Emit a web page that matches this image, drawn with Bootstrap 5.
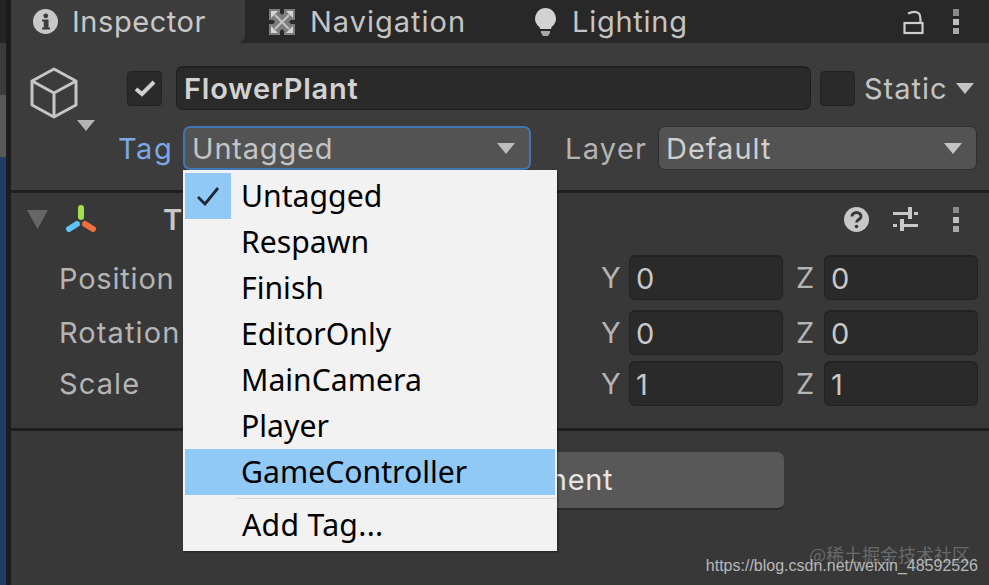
<!DOCTYPE html>
<html lang="en">
<head>
<meta charset="utf-8">
<title>Inspector</title>
<link href="https://cdn.jsdelivr.net/npm/bootstrap@5.3.0/dist/css/bootstrap.min.css" rel="stylesheet">
<style>
html,body{margin:0;height:585px;overflow:hidden;background:#383838}
.stage{width:989px;height:585px;font-family:Inter,"Liberation Sans",sans-serif;color:#c4c4c4;font-size:29px;letter-spacing:1px;line-height:1}
.edge{width:11px;flex:none;background:#1c1c1c}
.edge-a,.edge-b,.edge-c,.edge-d{width:6px}
.edge-a{height:43px;background:#242424}
.edge-b{height:52px;background:#3b3b3b}
.edge-c{height:62px;background:#585858}
.edge-d{height:428px;background:#1f3d66}
.main{width:978px}
.tabbar{height:43px;background:#282828}
.tab-on{width:234px;height:43px;background:#3c3c3c;border-radius:0 0 8px 0;padding-left:22px;gap:14px;color:#c8c8c8;letter-spacing:.55px}
.tab-nav{margin-left:23px;gap:14px;width:267px}
.tab-light{gap:16px;letter-spacing:.75px}
.tab-tools{margin-left:auto;margin-right:30px;gap:29px}
.head{height:147px;background:#3c3c3c;border-bottom:3px solid #1f1f1f;box-sizing:content-box}
.cube-col{width:116px;padding:24px 0 0 18px;flex:none}
.row-a{padding-top:23px;height:67px}
.chk{width:35px;height:35px;background:#2a2a2a;border:1px solid #222;border-radius:4px;flex:none}
.namefield{width:635px;height:44px;background:#2a2a2a;border:1px solid #1e1e1e;border-top-width:2px;border-radius:7px;margin:0 9px 0 14px;padding-left:7px;font-weight:600;color:#d2d2d2;letter-spacing:.8px}
.static{margin-left:9px;gap:8px}
.row-b{padding-top:16px;margin-left:-9px}
.taglabel{width:65px;color:#7ba7e6;flex:none;letter-spacing:1.5px}
.dd{height:44px;background:#535353;border-radius:7px;padding:0 14px 0 7px;flex:none}
.dd-tag{width:348px;border:2px solid #3f76b5;letter-spacing:.8px}
.dd-layer{width:319px;border:1px solid #2e2e2e;color:#cfcfcf}
.laylabel{margin-left:34px;width:93px;flex:none;color:#b4b4b4;letter-spacing:1.3px}
.comp{height:235px;background:#383838;border-bottom:3px solid #1f1f1f;box-sizing:content-box}
.comphead{height:52px;padding-left:16px}
.comp-t{margin-left:65px;font-weight:600;color:#c8c8c8}
.comp-tools{margin-left:auto;margin-right:30px;gap:24px}
.tool-dots{margin-left:11px}
.vrow{height:45px;padding-left:48px}
.vrow-1{margin-top:10px}
.vrow-1 .vlabel{padding-top:1px;letter-spacing:.8px}
.vrow-2{margin-top:10px}
.vrow-3{margin-top:6px}
.vlabel{width:542px;flex:none;color:#b4b4b4;letter-spacing:1.1px}
.axis{width:28px;flex:none;text-align:left;color:#b4b4b4}
.axis-z{margin-left:13px;width:28px}
.vfield{width:154px;height:45px;background:#2a2a2a;border:1px solid #222;border-top-width:2px;border-radius:6px;padding-left:6px;flex:none;color:#c8c8c8}
.bottom{height:154px;padding:21px 0 0 205px}
.addbtn{width:568px;height:58px;background:#585858;border:0;border-bottom:2px solid #2b2b2b;border-radius:7px;color:#e6e6e6;font:inherit;letter-spacing:.7px;padding:0 6px 2px 0}
.tagmenu{left:183px;top:170px;width:374px;height:381px;background:#f2f2f2;box-shadow:1px 1px 2px rgba(0,0,0,.45);padding:3px 2px;font-family:"Noto Sans","Open Sans",sans-serif;font-size:30.2px;letter-spacing:0;color:#000}
.mi{height:46px;padding-left:56px;line-height:46px;position:relative}
.mi-hot{background:#90c8f6;width:370px}
.mi-sep{height:1px;background:#d8d8d8;margin:3px 0 3px 51px}
.mi-add{letter-spacing:.3px;padding-left:57px}
.tickbox{left:0;top:0;width:46px;height:46px;background:#90c8f6}
.wm-cn{right:19px;top:541px;font:18px "Noto Sans CJK SC",sans-serif;color:rgba(200,200,200,.36);letter-spacing:0;white-space:nowrap}
.wm-url{right:11px;top:557px;font:16px "Liberation Sans",Arial,sans-serif;color:#b8b8b8;letter-spacing:0;white-space:nowrap}
.cube-caret{left:66px;top:77px}
.name-row{height:44px}
</style>
</head>
<body>
<div class="stage d-flex position-relative">
  <div class="edge">
    <div class="edge-a"></div><div class="edge-b"></div><div class="edge-c"></div><div class="edge-d"></div>
  </div>
  <div class="main">
    <div class="tabbar d-flex align-items-center">
      <div class="tab-on d-flex align-items-center">
        <svg width="25" height="25" viewBox="0 0 25 25"><circle cx="12.5" cy="12.500" r="12.500" fill="#c8c8c8"/><path d="M9 10.500h6.500v8H17v2H9v-2h1.800v-6H9z" fill="#3c3c3c"/><circle cx="12.800" cy="6.800" r="2.400" fill="#3c3c3c"/></svg>
        <span>Inspector</span>
      </div>
      <div class="tab-nav d-flex align-items-center">
        <svg width="28" height="28" viewBox="0 0 28 28"><path d="M1 1h11v4l2 2 2-2V1h11v11h-4l-2 2 2 2h4v11H16v-4l-2-2-2 2v4H1V16h4l2-2-2-2H1z" fill="#7c7c7c"/><path d="M18 3h7v7zM3 18v7h7zM3 3h7l-7 7zM25 25h-7l7-7z" fill="#d4d4d4"/><path d="M7 7l14 14M21 7L7 21" stroke="#c4c4c4" stroke-width="2"/></svg>
        <span>Navigation</span>
      </div>
      <div class="tab-light d-flex align-items-center">
        <svg width="21" height="28" viewBox="0 0 21 28"><path d="M10.500 0a10.500 10.500 0 0 1 6 19l-.5 2H5l-.5-2a10.500 10.500 0 0 1 6-19z" fill="#d2d2d2"/><path d="M6 23h9v2l-2 3H8l-2-3z" fill="#a8a8a8"/></svg>
        <span>Lighting</span>
      </div>
      <div class="tab-tools d-flex align-items-center">
        <svg width="21" height="26" viewBox="0 0 21 26" fill="none" stroke="#cdcdcd" stroke-width="2.200"><rect x="1.500" y="14" width="18" height="10"/><path d="M5 4.500c3-1.500 8-2.500 11 0 1.500 1.500 1.500 4 1.500 8.500"/></svg>
        <svg width="6" height="25" viewBox="0 0 6 25"><rect width="6" height="7" fill="#8a8a8a"/><rect y="10" width="6" height="6" fill="#c0c0c0"/><rect y="19" width="6" height="6" fill="#a8a8a8"/></svg>
      </div>
    </div>
    <div class="head d-flex">
      <div class="cube-col position-relative">
        <svg width="50" height="52" viewBox="0 0 50 52" fill="none" stroke="#c6c6c6" stroke-width="3" stroke-linejoin="round"><path d="M25 2l22 12v24L25 50 3 38V14z"/><path d="M3 14l22 12 22-12M25 26v24"/></svg>
        <svg class="cube-caret position-absolute" width="18" height="11" viewBox="0 0 18 11"><path d="M0 0h18l-9 11z" fill="#b4b4b4"/></svg>
      </div>
      <div class="flex-grow-1">
        <div class="row-a d-flex align-items-start">
          <div class="name-row d-flex align-items-center w-100">
            <div class="chk d-flex align-items-center justify-content-center"><svg width="22" height="18" viewBox="0 0 22 18"><path d="M2 10l6 5L20 3" fill="none" stroke="#cfcfcf" stroke-width="4"/></svg></div>
            <div class="namefield d-flex align-items-center">FlowerPlant</div>
            <div class="chk"></div>
            <div class="static d-flex align-items-center"><span>Static</span><svg width="18" height="11" viewBox="0 0 18 11"><path d="M0 0h18l-9 11z" fill="#c4c4c4"/></svg></div>
          </div>
        </div>
        <div class="row-b d-flex align-items-center">
          <span class="taglabel">Tag</span>
          <div class="dd dd-tag d-flex align-items-center justify-content-between"><span>Untagged</span><svg width="18" height="11" viewBox="0 0 18 11"><path d="M0 0h18l-9 11z" fill="#bdbdbd"/></svg></div>
          <span class="laylabel">Layer</span>
          <div class="dd dd-layer d-flex align-items-center justify-content-between"><span>Default</span><svg width="18" height="11" viewBox="0 0 18 11"><path d="M0 0h18l-9 11z" fill="#c4c4c4"/></svg></div>
        </div>
      </div>
    </div>
    <div class="comp">
      <div class="comphead d-flex align-items-center">
        <svg width="21" height="19" viewBox="0 0 21 19"><path d="M0 0h21L10.500 19z" fill="#666"/></svg>
        <svg class="ms-3" width="34" height="28" viewBox="0 0 34 28" stroke-width="6" stroke-linecap="round"><path d="M17 3v9" stroke="#a3e04e"/><path d="M13 19l-8 5" stroke="#5fc4f5"/><path d="M21 19l8 5" stroke="#f0713d"/></svg>
        <span class="comp-t">T</span>
        <div class="comp-tools d-flex align-items-center">
          <svg width="25" height="25" viewBox="0 0 25 25"><circle cx="12.500" cy="12.500" r="12.500" fill="#c8c8c8"/><path d="M8 9.500a4.500 4 0 0 1 9 0c0 3-4.500 3-4.500 6" fill="none" stroke="#383838" stroke-width="3"/><circle cx="12.500" cy="19.500" r="1.800" fill="#383838"/></svg>
          <svg width="25" height="24" viewBox="0 0 25 24" fill="#c8c8c8"><rect y="5" width="15" height="3"/><rect x="15" width="4" height="12"/><rect x="21" y="5" width="4" height="3"/><rect y="17" width="4" height="3"/><rect x="7" y="12" width="4" height="12"/><rect x="11" y="17" width="14" height="3"/></svg>
          <svg class="tool-dots" width="6" height="25" viewBox="0 0 6 25"><rect width="6" height="6" fill="#8a8a8a"/><rect y="10" width="6" height="6" fill="#c0c0c0"/><rect y="19" width="6" height="6" fill="#a8a8a8"/></svg>
        </div>
      </div>
      <div class="vrow vrow-1 d-flex align-items-center">
        <span class="vlabel">Position</span><span class="axis">Y</span><div class="vfield d-flex align-items-center">0</div><span class="axis axis-z">Z</span><div class="vfield d-flex align-items-center">0</div>
      </div>
      <div class="vrow vrow-2 d-flex align-items-center">
        <span class="vlabel">Rotation</span><span class="axis">Y</span><div class="vfield d-flex align-items-center">0</div><span class="axis axis-z">Z</span><div class="vfield d-flex align-items-center">0</div>
      </div>
      <div class="vrow vrow-3 d-flex align-items-center">
        <span class="vlabel">Scale</span><span class="axis">Y</span><div class="vfield d-flex align-items-center">1</div><span class="axis axis-z">Z</span><div class="vfield d-flex align-items-center">1</div>
      </div>
    </div>
    <div class="bottom">
      <button class="addbtn" type="button">Add Component</button>
    </div>
  </div>
  <div class="tagmenu position-absolute">
    <div class="mi"><span class="tickbox position-absolute d-flex align-items-center justify-content-center"><svg width="24" height="20" viewBox="0 0 24 20"><path d="M2 11l7 7L22 2" fill="none" stroke="#1c2733" stroke-width="2.800"/></svg></span>Untagged</div>
    <div class="mi">Respawn</div>
    <div class="mi">Finish</div>
    <div class="mi">EditorOnly</div>
    <div class="mi">MainCamera</div>
    <div class="mi">Player</div>
    <div class="mi mi-hot">GameController</div>
    <div class="mi-sep"></div>
    <div class="mi mi-add">Add Tag...</div>
  </div>
  <span class="wm-cn position-absolute">@稀土掘金技术社区</span>
  <span class="wm-url position-absolute">https://blog.csdn.net/weixin_48592526</span>
</div>
<script src="https://cdn.jsdelivr.net/npm/bootstrap@5.3.0/dist/js/bootstrap.bundle.min.js"></script>
</body>
</html>
